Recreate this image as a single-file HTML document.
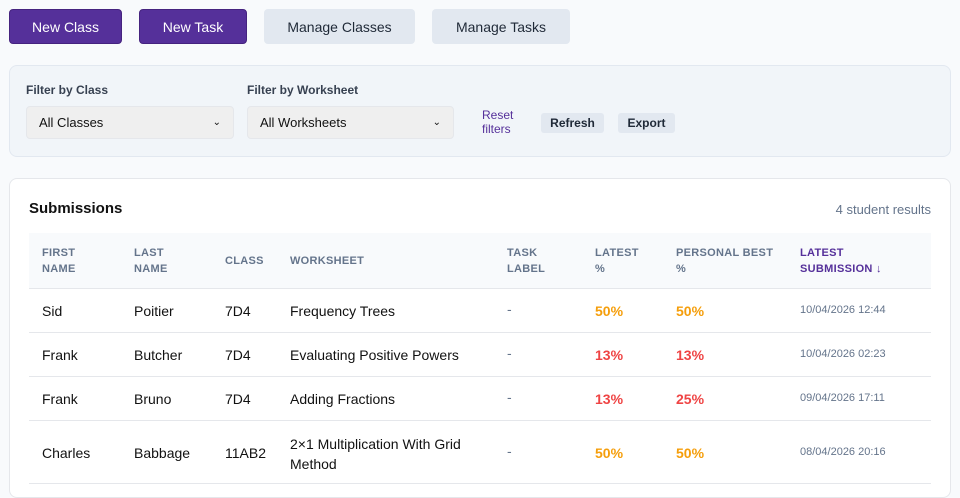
<!DOCTYPE html>
<html><head><style>
*{box-sizing:border-box;margin:0;padding:0}
body{width:960px;height:484px;overflow:hidden;background:#f8fafc;font-family:"Liberation Sans",sans-serif;color:#1f2937;position:relative}
.a{position:absolute}
.btn{position:absolute;top:9px;height:35px;border-radius:4px;font-size:14px;display:flex;align-items:center;justify-content:center}
.p{background:#55309a;color:#fff;border:1px solid #45237f}
.g{background:#e2e8f0;color:#1f2937}
.panel{left:9px;top:65px;width:942px;height:92px;background:#f1f5f9;border:1px solid #e2e8f0;border-radius:8px}
.lbl{font-size:12px;font-weight:bold;color:#374151;top:83px}
.sel{top:106px;height:33px;background:#efefef;border:1px solid #e5e7eb;border-radius:4px;font-size:13px;padding:0 12px;display:flex;align-items:center;justify-content:space-between;color:#111}
.sm{top:113px;height:20px;background:#e2e8f0;border-radius:3px;font-size:12px;font-weight:bold;display:flex;align-items:center;justify-content:center;color:#1f2937}
.card{left:9px;top:178px;width:942px;height:320px;background:#fff;border:1px solid #e5e7eb;border-radius:8px}
.th{font-size:11px;font-weight:bold;color:#64748b;letter-spacing:.3px;line-height:16px}
.td{font-size:14px;color:#111}
.row{left:29px;width:902px;border-top:1px solid #e5e7eb}
.o{color:#f59e0b;font-weight:bold}.r{color:#ef4444;font-weight:bold}
.dt{font-size:11px;color:#64748b}
</style></head><body>
<div class="btn p" style="left:9px;width:113px">New Class</div>
<div class="btn p" style="left:139px;width:108px">New Task</div>
<div class="btn g" style="left:264px;width:151px">Manage Classes</div>
<div class="btn g" style="left:432px;width:138px">Manage Tasks</div>
<div class="a panel"></div>
<div class="a lbl" style="left:26px">Filter by Class</div>
<div class="a lbl" style="left:247px">Filter by Worksheet</div>
<div class="a sel" style="left:26px;width:208px"><span>All Classes</span><span style="font-size:10px">&#8964;</span></div>
<div class="a sel" style="left:247px;width:207px"><span>All Worksheets</span><span style="font-size:10px">&#8964;</span></div>
<div class="a" style="left:482px;top:108px;font-size:12px;color:#55309a;line-height:14px">Reset<br>filters</div>
<div class="a sm" style="left:541px;width:63px">Refresh</div>
<div class="a sm" style="left:618px;width:57px">Export</div>
<div class="a card"></div>
<div class="a" style="left:29px;top:200px;font-size:15px;font-weight:bold;color:#111">Submissions</div>
<div class="a" style="right:29px;top:202px;font-size:13px;color:#64748b">4 student results</div>
<div class="a" style="left:29px;top:233px;width:902px;height:55px;background:#f8fafc"></div>
<div class="a th" style="left:42px;top:245px">FIRST<br>NAME</div>
<div class="a th" style="left:134px;top:245px">LAST<br>NAME</div>
<div class="a th" style="left:225px;top:253px">CLASS</div>
<div class="a th" style="left:290px;top:253px">WORKSHEET</div>
<div class="a th" style="left:507px;top:245px">TASK<br>LABEL</div>
<div class="a th" style="left:595px;top:245px">LATEST<br>%</div>
<div class="a th" style="left:676px;top:245px">PERSONAL BEST<br>%</div>
<div class="a th" style="left:800px;top:245px;color:#55309a">LATEST<br>SUBMISSION ↓</div>
<div class="a row" style="top:288px"></div>
<div class="a row" style="top:332px"></div>
<div class="a row" style="top:376px"></div>
<div class="a row" style="top:420px"></div>
<div class="a row" style="top:483px"></div>

<div class="a td" style="left:42px;top:303px">Sid</div><div class="a td" style="left:134px;top:303px">Poitier</div><div class="a td" style="left:225px;top:303px">7D4</div><div class="a td" style="left:290px;top:303px">Frequency Trees</div><div class="a td" style="left:507px;top:301px;color:#64748b">-</div><div class="a td o" style="left:595px;top:303px">50%</div><div class="a td o" style="left:676px;top:303px">50%</div><div class="a dt" style="left:800px;top:304px">10/04/2026 12:44</div>

<div class="a td" style="left:42px;top:347px">Frank</div><div class="a td" style="left:134px;top:347px">Butcher</div><div class="a td" style="left:225px;top:347px">7D4</div><div class="a td" style="left:290px;top:347px">Evaluating Positive Powers</div><div class="a td" style="left:507px;top:345px;color:#64748b">-</div><div class="a td r" style="left:595px;top:347px">13%</div><div class="a td r" style="left:676px;top:347px">13%</div><div class="a dt" style="left:800px;top:348px">10/04/2026 02:23</div>

<div class="a td" style="left:42px;top:391px">Frank</div><div class="a td" style="left:134px;top:391px">Bruno</div><div class="a td" style="left:225px;top:391px">7D4</div><div class="a td" style="left:290px;top:391px">Adding Fractions</div><div class="a td" style="left:507px;top:389px;color:#64748b">-</div><div class="a td r" style="left:595px;top:391px">13%</div><div class="a td r" style="left:676px;top:391px">25%</div><div class="a dt" style="left:800px;top:392px">09/04/2026 17:11</div>

<div class="a td" style="left:42px;top:445px">Charles</div><div class="a td" style="left:134px;top:445px">Babbage</div><div class="a td" style="left:225px;top:445px">11AB2</div><div class="a td" style="left:290px;top:434px;line-height:20px">2×1 Multiplication With Grid<br>Method</div><div class="a td" style="left:507px;top:443px;color:#64748b">-</div><div class="a td o" style="left:595px;top:445px">50%</div><div class="a td o" style="left:676px;top:445px">50%</div><div class="a dt" style="left:800px;top:446px">08/04/2026 20:16</div>
</body></html>
